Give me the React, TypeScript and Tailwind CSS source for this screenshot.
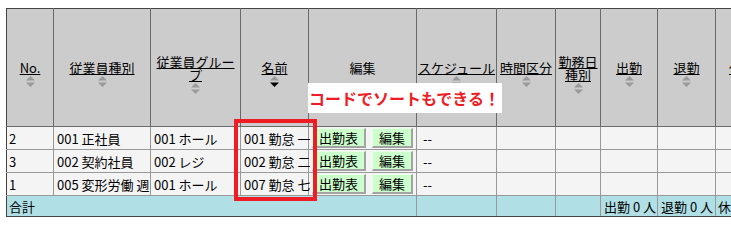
import React from 'react';

type Col = { label: React.ReactNode; width: number; sort?: 'none' | 'asc' | 'desc'; link?: boolean; nowrap?: boolean };

const columns: Col[] = [
  { label: 'No.', width: 47, sort: 'none', link: true },
  { label: '従業員種別', width: 97, sort: 'none', link: true },
  { label: '従業員グループ', width: 90, sort: 'none', link: true },
  { label: '名前', width: 68, sort: 'desc', link: true },
  { label: '編集', width: 108 },
  { label: 'スケジュール', width: 80, sort: 'none', link: true, nowrap: true },
  { label: '時間区分', width: 59, sort: 'none', link: true, nowrap: true },
  { label: '勤務日種別', width: 45, sort: 'none', link: true },
  { label: '出勤', width: 57, sort: 'none', link: true },
  { label: '退勤', width: 58, sort: 'none', link: true },
  { label: '休憩', width: 53, sort: 'none', link: true },
  { label: '', width: 60 },
];

const rows = [
  { no: '2', kind: '001 正社員', group: '001 ホール', name: '001 勤怠 一' },
  { no: '3', kind: '002 契約社員', group: '002 レジ', name: '002 勤怠 二' },
  { no: '1', kind: '005 変形労働 週', group: '001 ホール', name: '007 勤怠 七' },
];

function SortIcon({ dir }: { dir: 'none' | 'asc' | 'desc' }) {
  const up = dir === 'asc' ? '#000' : '#9a9a9a';
  const down = dir === 'desc' ? '#000' : '#9a9a9a';
  return (
    <svg width="9" height="11" viewBox="0 0 9 11" className="mt-[2px] block">
      <polygon points="0,4.5 4.5,0 9,4.5" fill={up} />
      <polygon points="0,6.5 9,6.5 4.5,11" fill={down} />
    </svg>
  );
}

function Btn({ children }: { children: React.ReactNode }) {
  return (
    <span className="inline-flex h-[20px] items-center bg-[#ccffcc] px-[6px] border-l border-t border-[#eaffea] border-r-2 border-b-2 border-r-[#a3a3a3] border-b-[#a3a3a3] leading-none">
      {children}
    </span>
  );
}

export default function App() {
  return (
    <div className="relative w-[731px] h-[226px] overflow-hidden bg-white text-black text-[13px] font-['Noto_Sans_CJK_JP',sans-serif]">
      <div className="pt-[8px] pl-[6px]">
        <table className="table-fixed border-collapse" style={{ width: columns.reduce((s, c) => s + c.width, 0) }}>
          <colgroup>
            {columns.map((c, i) => (
              <col key={i} style={{ width: c.width }} />
            ))}
          </colgroup>
          <thead>
            <tr className="h-[118px]">
              {columns.map((c, i) => (
                <th
                  key={i}
                  className={`border border-[#6a6a6a] border-t-[#444] bg-[#cccccc] p-0 font-normal align-middle leading-[13px] ${i === 0 ? 'border-l-[#444]' : ''} ${c.nowrap ? 'px-0 whitespace-nowrap' : 'px-[1px]'}`}
                >
                  <div className="flex flex-col items-center">
                    {c.sort && <div className="h-[13px]" />}
                    <span className={c.link ? 'underline underline-offset-[1px]' : ''}>{c.label}</span>
                    {c.sort && <SortIcon dir={c.sort} />}
                  </div>
                </th>
              ))}
            </tr>
          </thead>
          <tbody>
            {rows.map((r, i) => (
              <tr key={i} className="h-[23px] bg-[#f4f4f4]">
                <td className="border border-[#999] border-l-[#444] px-[2px] py-0 leading-none">{r.no}</td>
                <td className="border border-[#999] px-[3px] py-0 leading-none whitespace-nowrap overflow-hidden">{r.kind}</td>
                <td className="border border-[#999] px-[3px] py-0 leading-none whitespace-nowrap">{r.group}</td>
                <td className="border border-[#999] px-[3px] py-0 leading-none whitespace-nowrap">{r.name}</td>
                <td className="border border-[#999] pl-[3px] py-0">
                  <div className="flex gap-[6px]">
                    <Btn>出勤表</Btn>
                    <Btn>編集</Btn>
                  </div>
                </td>
                <td className="border border-[#999] pl-[6px] py-0 leading-none">--</td>
                {Array.from({ length: 6 }).map((_, j) => (
                  <td key={j} className="border border-[#999]" />
                ))}
              </tr>
            ))}
            <tr className="h-[21px] bg-[#b0e0e6]">
              <td colSpan={5} className="border border-[#999] border-l-[#444] border-b-[#444] px-[2px] py-0 leading-none">合計</td>
              <td className="border border-[#999] border-b-[#444]" />
              <td className="border border-[#999] border-b-[#444]" />
              <td className="border border-[#999] border-b-[#444]" />
              <td className="border border-[#999] border-b-[#444] px-[3px] py-0 leading-none whitespace-nowrap">出勤 0 人</td>
              <td className="border border-[#999] border-b-[#444] px-[3px] py-0 leading-none whitespace-nowrap">退勤 0 人</td>
              <td className="border border-[#999] border-b-[#444] px-[2px] py-0 leading-none whitespace-nowrap">休憩 0 人</td>
              <td className="border border-[#999] border-b-[#444]" />
            </tr>
          </tbody>
        </table>
      </div>

      {/* callout */}
      <div className="absolute left-[308px] top-[83px] w-[194px] h-[30px] bg-white flex items-center pl-[1px] text-[16px] font-bold text-[#ee1c24] whitespace-nowrap">
        コードでソートもできる！
      </div>
      {/* highlight frame */}
      <div className="absolute left-[234px] top-[119px] w-[83px] h-[82px] border-4 border-[#ee1c24]" />
    </div>
  );
}
